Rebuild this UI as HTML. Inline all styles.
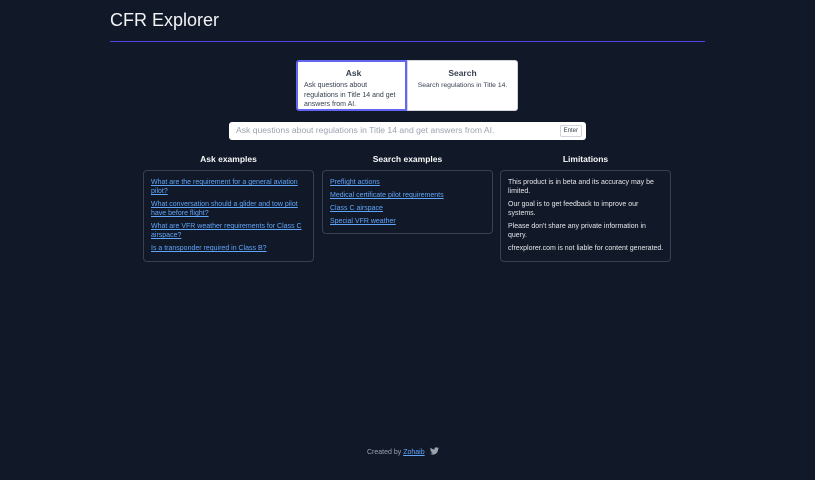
<!DOCTYPE html>
<html><head><meta charset="utf-8"><style>
*{box-sizing:border-box;margin:0;padding:0}
body{width:815px;height:480px;background:#111827;font-family:"Liberation Sans",sans-serif;color:#e5e7eb;position:relative;overflow:hidden}
.title{position:absolute;left:110px;top:10px;font-size:18px;color:#f3f4f6}
.line{position:absolute;left:110px;top:41px;width:595px;height:1px;background:#4f46e5}
.tab{position:absolute;top:60px;height:51px;background:#fff;color:#374151;border:1px solid #d1d5db;padding:7px 7px;white-space:nowrap}
.tab h3{font-size:8.5px;text-align:center;margin-bottom:3px;color:#374151}
.tab p{font-size:7px;line-height:9.5px;color:#374151}
.ask{left:296px;width:111px;border:2px solid #6366f1;border-radius:3px 0 0 3px;padding:6px 2px 6px 6px}
.search{left:407px;width:111px;border-radius:0 3px 3px 0}
.search p{text-align:center;font-size:6.8px}
.inp{position:absolute;left:229px;top:122px;width:357px;height:18px;background:#fff;border-radius:3px;font-size:8.6px;color:#9ca3af;padding:3px 7px}
.btn{position:absolute;right:4px;top:3px;border:1px solid #d1d5db;border-radius:2px;font-size:6px;color:#374151;padding:2px 3px}
.col{position:absolute;top:154px;width:171px}
.col h2{font-size:8.5px;text-align:center;color:#f9fafb;margin-bottom:6px}
.card{border:1px solid #374151;border-radius:4px;padding:7px 4px 4px 7px;white-space:nowrap;overflow:hidden}
.card a,.card p{display:block;font-size:7px;line-height:9px;margin-bottom:4px}
.card a{color:#60a5fa;text-decoration:underline}
.card p{color:#e5e7eb}
.foot{position:absolute;top:447px;left:367px;font-size:7px;color:#9ca3af}
.foot a{color:#60a5fa;text-decoration:underline}
</style></head><body>
<div class="title">CFR Explorer</div>
<div class="line"></div>
<div class="tab ask"><h3>Ask</h3><p>Ask questions about<br>regulations in Title 14 and get<br>answers from AI.</p></div>
<div class="tab search"><h3>Search</h3><p>Search regulations in Title 14.</p></div>
<div class="inp">Ask questions about regulations in Title 14 and get answers from AI.<span class="btn">Enter</span></div>
<div class="col" style="left:143px"><h2>Ask examples</h2><div class="card" style="height:92px">
<a>What are the requirement for a general aviation<br>pilot?</a>
<a>What conversation should a glider and tow pilot<br>have before flight?</a>
<a>What are VFR weather requirements for Class C<br>airspace?</a>
<a>Is a transponder required in Class B?</a></div></div>
<div class="col" style="left:322px"><h2>Search examples</h2><div class="card" style="height:64px">
<a>Preflight actions</a><a>Medical certificate pilot requirements</a><a>Class C airspace</a><a>Special VFR weather</a></div></div>
<div class="col" style="left:500px"><h2>Limitations</h2><div class="card" style="height:92px">
<p>This product is in beta and its accuracy may be<br>limited.</p>
<p>Our goal is to get feedback to improve our<br>systems.</p>
<p>Please don't share any private information in<br>query.</p>
<p>cfrexplorer.com is not liable for content generated.</p></div></div>
<div class="foot">Created by <a>Zohaib</a> <svg width="9" height="8" viewBox="0 0 24 20" style="vertical-align:-1px;margin-left:3px"><path fill="#9ca3af" d="M24 2.4a9.8 9.8 0 0 1-2.8.8A4.9 4.9 0 0 0 23.3.5a9.9 9.9 0 0 1-3.1 1.2A4.9 4.9 0 0 0 11.8 6 14 14 0 0 1 1.7.9a4.9 4.9 0 0 0 1.5 6.6A4.9 4.9 0 0 1 1 6.9a4.9 4.9 0 0 0 3.9 4.8 4.9 4.9 0 0 1-2.2.1 4.9 4.9 0 0 0 4.6 3.4A9.9 9.9 0 0 1 0 17.3 14 14 0 0 0 7.5 19.5c9.1 0 14-7.5 14-14v-.6A10 10 0 0 0 24 2.4z"/></svg></div>
</body></html>
